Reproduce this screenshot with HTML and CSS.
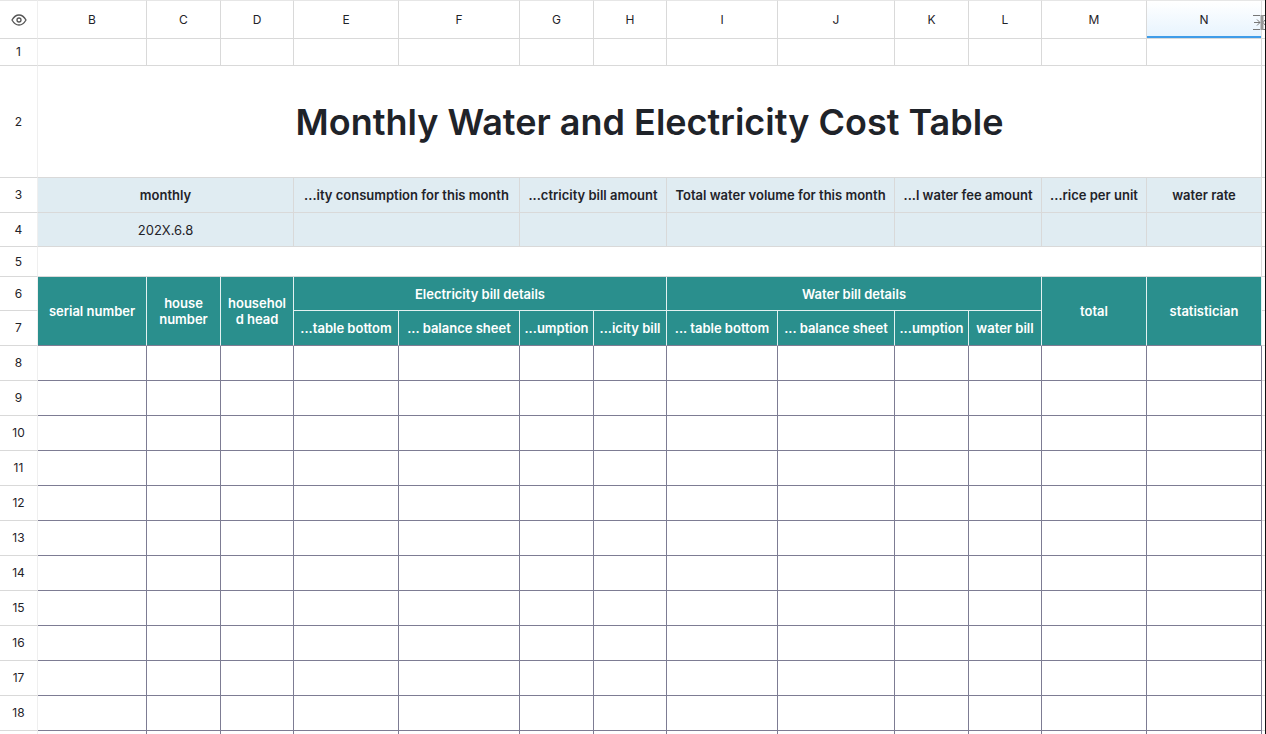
FILE: index.html
```
<!DOCTYPE html>
<html lang="en">
<head>
  <meta charset="utf-8">
  <title>Monthly Water and Electricity Cost Table</title>
  <link rel="stylesheet" href="styles.css">
</head>
<body>
  <main class="sheet">
    <table class="grid">
      <colgroup>
        <col class="col-index">
        <col class="col-b">
        <col class="col-c">
        <col class="col-d">
        <col class="col-e">
        <col class="col-f">
        <col class="col-c">
        <col class="col-d">
        <col class="col-i">
        <col class="col-j">
        <col class="col-c">
        <col class="col-d">
        <col class="col-m">
        <col class="col-n">
        <col class="col-edge">
      </colgroup>
      <thead>
        <tr class="letters">
          <th>
            <svg class="eye" viewBox="0 0 16 12" role="img" aria-label="View">
              <path d="M1 6 C3 2.5 5.2 1 8 1 S13 2.5 15 6 C13 9.5 10.8 11 8 11 S3 9.5 1 6 Z"/>
              <circle cx="8" cy="6" r="2"/>
            </svg>
          </th>
          <th>B</th><th>C</th><th>D</th><th>E</th><th>F</th><th>G</th><th>H</th>
          <th>I</th><th>J</th><th>K</th><th>L</th><th>M</th>
          <th class="selected">N
            <svg class="fold" viewBox="0 0 12 17" aria-hidden="true">
              <path d="M0 1.5 H7 M0 15.5 H7 M1 8.5 H7 M4 5.5 L7 8.5 L4 11.5 M10 1.5 H12 M10 15.5 H12 M12 6 L10 8.5 L12 11"/>
              <path class="fold-bar" d="M9 1 V16"/>
            </svg>
          </th>
          <th></th>
        </tr>
      </thead>
      <tbody>
        <tr class="row-1">
          <th>1</th>
          <td></td><td></td><td></td><td></td><td></td><td></td><td></td>
          <td></td><td></td><td></td><td></td><td></td><td></td><td></td>
        </tr>
        <tr class="row-title">
          <th>2</th>
          <td colspan="13"><h1>Monthly Water and Electricity Cost Table</h1></td>
          <td></td>
        </tr>
        <tr class="summary summary-head">
          <th>3</th>
          <td colspan="3">monthly</td>
          <td colspan="2">...ity consumption for this month</td>
          <td colspan="2">...ctricity bill amount</td>
          <td colspan="2">Total water volume for this month</td>
          <td colspan="2">...l water fee amount</td>
          <td>...rice per unit</td>
          <td>water rate</td>
          <td></td>
        </tr>
        <tr class="summary summary-value">
          <th>4</th>
          <td colspan="3">202X.6.8</td>
          <td colspan="2"></td>
          <td colspan="2"></td>
          <td colspan="2"></td>
          <td colspan="2"></td>
          <td></td>
          <td></td>
          <td></td>
        </tr>
        <tr class="row-gap">
          <th>5</th>
          <td colspan="13"></td>
          <td></td>
        </tr>
        <tr class="details details-group">
          <th>6</th>
          <td rowspan="2" class="tall">serial number</td>
          <td rowspan="2" class="tall">house number</td>
          <td rowspan="2" class="tall">household head</td>
          <td colspan="4">Electricity bill details</td>
          <td colspan="4">Water bill details</td>
          <td rowspan="2" class="tall">total</td>
          <td rowspan="2" class="tall">statistician</td>
          <td></td>
        </tr>
        <tr class="details details-sub">
          <th>7</th>
          <td>...table bottom</td>
          <td>... balance sheet</td>
          <td>...umption</td>
          <td>...icity bill</td>
          <td>... table bottom</td>
          <td>... balance sheet</td>
          <td>...umption</td>
          <td>water bill</td>
          <td></td>
        </tr>
      </tbody>
      <tbody id="entries" class="entries"></tbody>
    </table>
  </main>

  <script>
    /* Empty rows for the household entries, plus a blank one at the end */
    var entries = document.getElementById('entries');

    for (var row = 8; row <= 19; row++) {
      var tr = entries.insertRow();
      var th = document.createElement('th');
      th.textContent = row < 19 ? row : '';
      tr.appendChild(th);
      for (var i = 0; i < 14; i++) {
        tr.insertCell();
      }
    }
  </script>
</body>
</html>
```

FILE: styles.css
```
* {
  box-sizing: border-box;
}

body {
  margin: 0;
  background: #fff;
  color: #1f2329;
  font-family: Inter, "Liberation Sans", sans-serif;
  font-size: 13px;
}

.sheet {
  height: 100vh;
  overflow: hidden;
  border-right: 1px solid #111;
}

.grid {
  width: 100%;
  table-layout: fixed;
  border-collapse: separate;
  border-spacing: 0;
  text-align: center;
}

/* column widths */
.col-index { width: 38px; }
.col-b { width: 109px; }
.col-c { width: 74px; }
.col-d { width: 73px; }
.col-e { width: 105px; }
.col-f { width: 121px; }
.col-i { width: 111px; }
.col-j { width: 117px; }
.col-m { width: 105px; }
.col-n { width: 115px; }
.col-edge { width: 3px; }

th,
td {
  height: 35px;
  padding: 0;
  border-right: 1px solid #d9d9d9;
  border-bottom: 1px solid #d9d9d9;
  line-height: 16px;
  white-space: nowrap;
}

th {
  font-size: 12px;
  font-weight: 400;
}

th:first-child {
  border-right-color: #efefef;
}

td:last-child,
th:last-child {
  border-right: 0;
}

/* letters on top */
.letters th {
  position: relative;
  height: 39px;
  border-top: 1px solid #e6e6e6;
}

.letters .selected {
  background: linear-gradient(#fff, #e6f3fe);
  border-right-color: #e0e0e0;
  box-shadow: inset 0 -2px #3f9ce8;
}

.eye {
  display: block;
  width: 16px;
  height: 12px;
  margin: 0 auto;
  fill: none;
  stroke: #555;
  stroke-width: 1.3;
}

.fold {
  position: absolute;
  top: 13px;
  right: -4px;
  z-index: 1;
  width: 12px;
  height: 17px;
  fill: none;
  stroke: #777;
}

.fold-bar {
  stroke-width: 3;
  stroke: #999;
}

.row-1 th,
.row-1 td {
  height: 27px;
}

.row-title th,
.row-title td {
  height: 112px;
}

h1 {
  margin: 0;
  font-size: 36px;
  font-weight: 600;
  line-height: 48px;
}

/* pale blue summary */
.summary td:not(:last-child) {
  background: #e0ecf2;
}

.summary-head td {
  font-weight: 600;
}

.summary-value th,
.summary-value td {
  height: 34px;
}

.row-gap th,
.row-gap td {
  height: 30px;
}

/* green table header */
.details td:not(:last-child) {
  background: #2a8f8d;
  border-color: #e3f1f1;
  color: #fff;
  font-weight: 600;
}

.details-group th,
.details-group td {
  height: 34px;
}

.details-sub td:not(:last-child),
.details .tall:not(:last-child) {
  border-bottom-color: #7d7c93;
}

.details .tall {
  padding: 0 5px;
  white-space: normal;
  overflow-wrap: anywhere;
}

.entries td:not(:last-child) {
  border-color: #7d7c93;
}
```
